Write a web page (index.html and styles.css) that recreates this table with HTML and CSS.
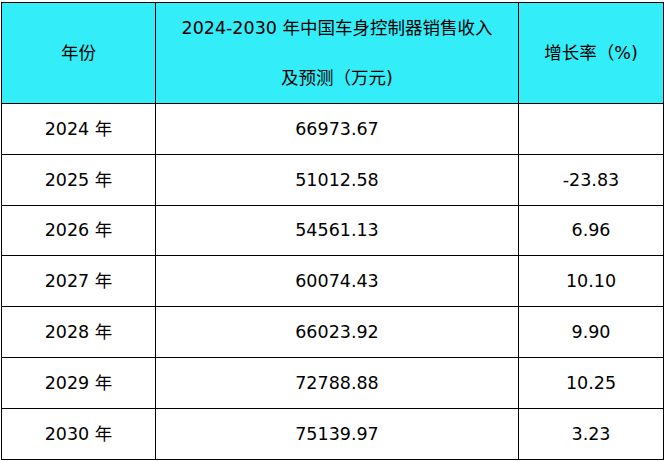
FILE: index.html
```html
<!DOCTYPE html>
<html lang="zh-CN">
<head>
<meta charset="utf-8">
<link rel="stylesheet" href="styles.css">
</head>
<body>
<table class="data">
  <colgroup>
    <col class="c1"><col class="c2"><col class="c3">
  </colgroup>
  <thead>
    <tr class="head">
      <th>年份</th>
      <th class="title">2024-2030 年中国车身控制器销售收入<br>及预测（万元)</th>
      <th>增长率（%)</th>
    </tr>
  </thead>
  <tbody>
    <tr><td>2024 年</td><td>66973.67</td><td></td></tr>
    <tr><td>2025 年</td><td>51012.58</td><td>-23.83</td></tr>
    <tr><td>2026 年</td><td>54561.13</td><td>6.96</td></tr>
    <tr><td>2027 年</td><td>60074.43</td><td>10.10</td></tr>
    <tr><td>2028 年</td><td>66023.92</td><td>9.90</td></tr>
    <tr><td>2029 年</td><td>72788.88</td><td>10.25</td></tr>
    <tr><td>2030 年</td><td>75139.97</td><td>3.23</td></tr>
  </tbody>
</table>
</body>
</html>
```
FILE: styles.css
```css
html, body {
  margin: 0;
  padding: 0;
  background: #ffffff;
}
body {
  padding: 2px 0 0 1px;
  font-family: "DejaVu Sans", "Noto Sans CJK SC", sans-serif;
  font-size: 17.5px;
  color: #000;
}
.data {
  border-collapse: collapse;
  table-layout: fixed;
  width: 662px;
}
.c1 { width: 154px; }
.c2 { width: 363px; }
.c3 { width: 145px; }
.data th, .data td {
  border: 1.5px solid #000;
  text-align: center;
  vertical-align: middle;
  padding: 0;
  font-weight: normal;
  line-height: 22px;
}
.head th {
  background: #33eef8;
  height: 99px;
}
.head .title {
  line-height: 50px;
}
.data td { height: 49.8px; }
```
